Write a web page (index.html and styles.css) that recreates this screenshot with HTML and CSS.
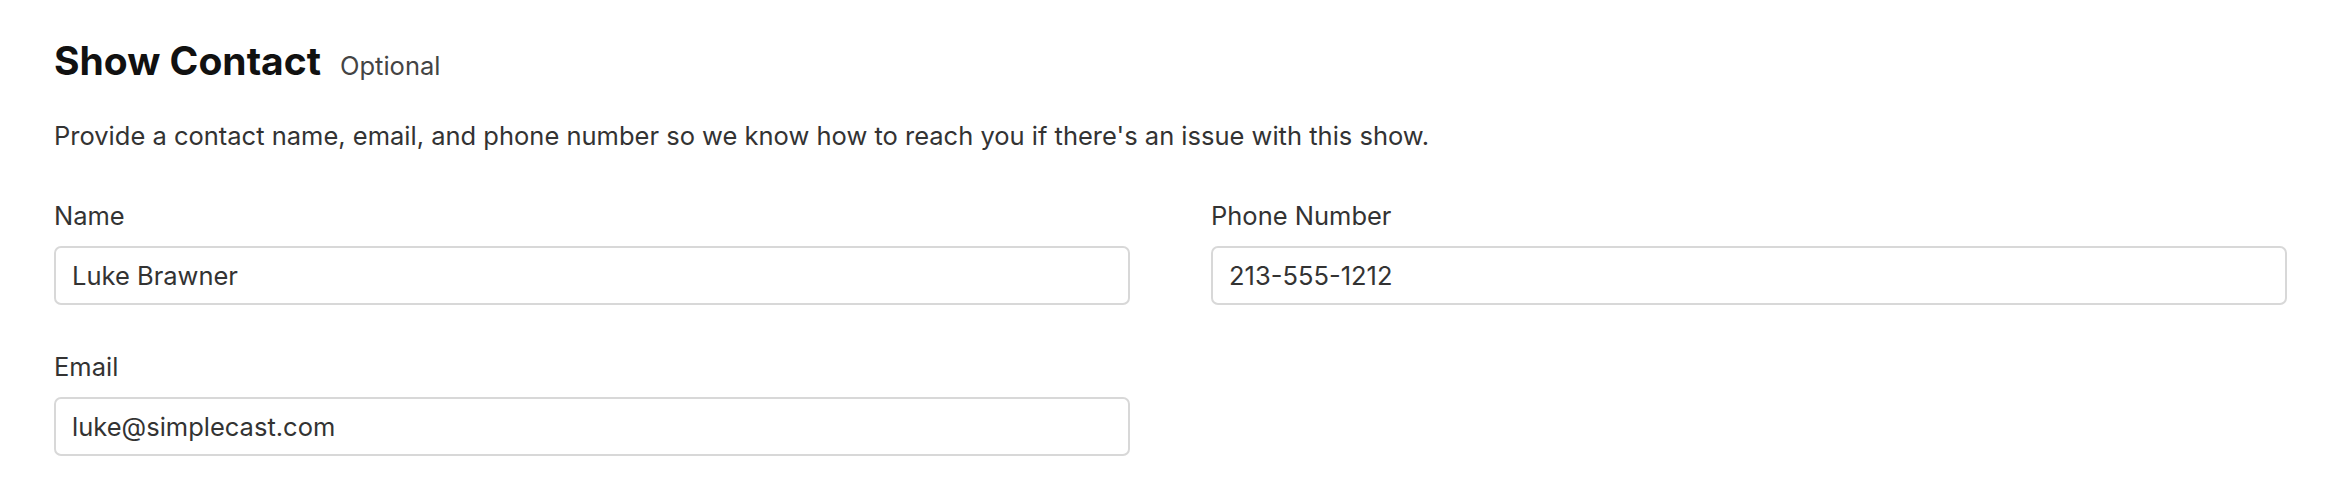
FILE: index.html
```html
<!DOCTYPE html>
<html lang="en">
<head>
<meta charset="utf-8">
<title>Show Contact</title>
<link rel="stylesheet" href="styles.css">
</head>
<body>
<section class="contact">
  <header class="contact__head">
    <h2 class="contact__title">Show Contact</h2>
    <span class="contact__optional">Optional</span>
  </header>
  <p class="contact__desc">Provide a contact name, email, and phone number so we know how to reach you if there's an issue with this show.</p>
  <div class="contact__grid">
    <div class="field">
      <label class="field__label" for="name">Name</label>
      <input class="field__input" id="name" type="text" value="Luke Brawner">
    </div>
    <div class="field">
      <label class="field__label" for="phone">Phone Number</label>
      <input class="field__input" id="phone" type="text" value="213-555-1212">
    </div>
    <div class="field">
      <label class="field__label" for="email">Email</label>
      <input class="field__input" id="email" type="text" value="luke@simplecast.com">
    </div>
  </div>
</section>
</body>
</html>
```

FILE: styles.css
```css
html, body {
  margin: 0;
  padding: 0;
  background: #ffffff;
}

body {
  font-family: Inter, "Noto Sans", "Liberation Sans", sans-serif;
  color: #333333;
}

.contact {
  padding: 38px 63px 0 54px;
}

.contact__head {
  display: flex;
  align-items: baseline;
  gap: 19px;
}

.contact__title {
  margin: 0;
  font-size: 39px;
  line-height: 46px;
  font-weight: 700;
  color: #111111;
}

.contact__optional {
  font-size: 25.5px;
  line-height: 34px;
  color: #444444;
}

.contact__desc {
  margin: 35px 0 0;
  font-size: 25.5px;
  line-height: 34px;
  color: #333333;
}

.contact__grid {
  display: grid;
  grid-template-columns: 1fr 1fr;
  column-gap: 81px;
  row-gap: 45px;
  margin-top: 46px;
}

.field {
  display: flex;
  flex-direction: column;
}

.field__label {
  font-size: 25.5px;
  line-height: 34px;
  color: #333333;
  margin-bottom: 13px;
}

.field__input {
  box-sizing: border-box;
  height: 59px;
  width: 100%;
  margin: 0;
  padding: 0 16px;
  border: 2px solid #d8d8d8;
  border-radius: 7px;
  background: #ffffff;
  font-family: Inter, "Noto Sans", "Liberation Sans", sans-serif;
  font-size: 25.5px;
  color: #333333;
  outline: none;
}
```
